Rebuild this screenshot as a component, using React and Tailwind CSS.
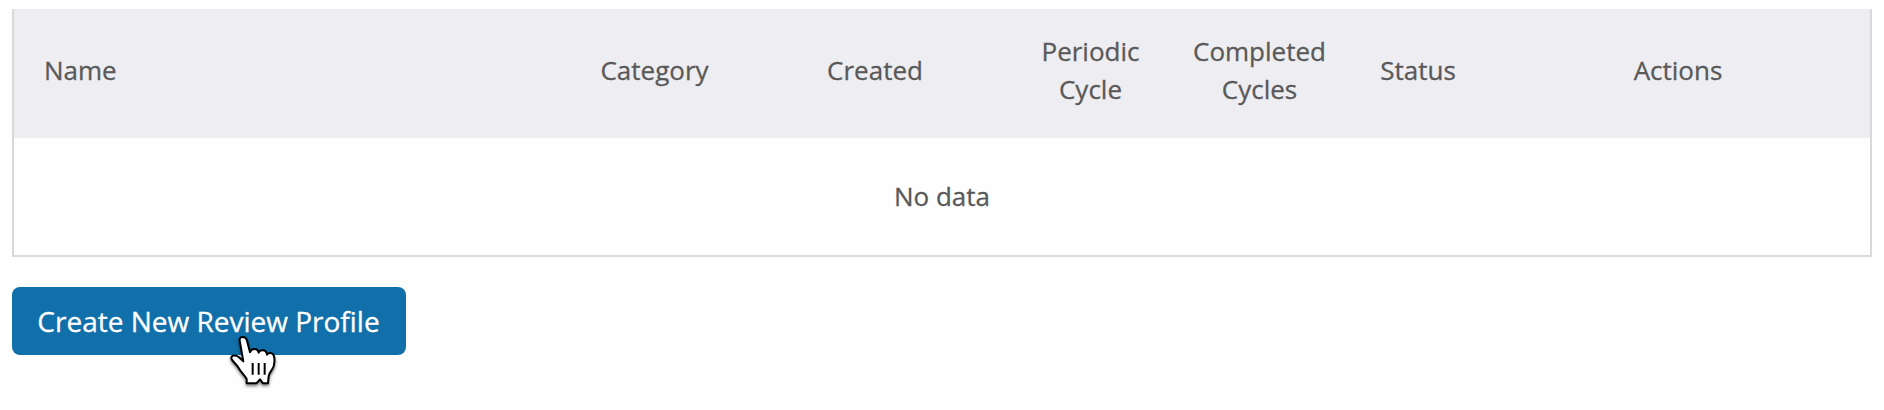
const columns = [
  { label: "Name", className: "w-[557px] pl-[30px] text-left" },
  { label: "Category", className: "w-[167px] text-center" },
  { label: "Created", className: "w-[274px] text-center" },
  { label: "Periodic Cycle", className: "w-[157px] px-6 text-center" },
  { label: "Completed Cycles", className: "w-[181px] px-6 text-center" },
  { label: "Status", className: "w-[136px] text-center" },
  { label: "Actions", className: "text-center" },
];

const HandCursor = () => (
  <svg
    viewBox="684 282 150 162"
    className="pointer-events-none absolute left-[216px] top-[47px] h-[54px] w-[50px] overflow-visible drop-shadow-[0_2px_1.5px_rgba(0,0,0,0.5)]"
    aria-hidden="true"
  >
    <path
      d="M719 301 C718 294 723 291 728 291 C735 291 739 295 741 302 L750 337 C752 329 759 326 766 327 C772 328 775 332 776 338 C780 330 790 329 796 333 C799 336 801 339 801 344 C807 336 818 338 821 346 C824 354 824 367 821 379 C818 389 808 397 806 408 L804 430 L789 430 L780 418 L769 430 L740 430 L740 417 C734 406 722 396 716 384 C710 372 697 365 694 356 C693 346 706 343 716 351 L730 364 Z"
      fill="white"
      stroke="black"
      strokeWidth="6"
      strokeLinejoin="round"
    />
    <path
      d="M758 369 V404 M776 369 V404 M794 369 V404"
      fill="none"
      stroke="black"
      strokeWidth="6"
    />
  </svg>
);

const App = () => {
  return (
    <div className="min-h-screen bg-[#fefefe] px-3 pt-[9px] font-['Open_Sans',sans-serif] [-webkit-text-stroke:0.3px]">
      {/* Review profiles */}
      <div className="border-2 border-t-0 border-[#d9d9d9]">
        <table className="w-full table-fixed text-[26px] leading-[38px] text-[#595959]">
          <thead>
            <tr className="h-[129px] bg-[#eeedf2]">
              {columns.map((column) => (
                <th
                  key={column.label}
                  className={`pb-[7px] font-normal ${column.className}`}
                >
                  {column.label}
                </th>
              ))}
            </tr>
          </thead>
          <tbody>
            <tr className="h-[117px]">
              <td colSpan={columns.length} className="pb-[2px] text-center">
                No data
              </td>
            </tr>
          </tbody>
        </table>
      </div>

      {/* Create button */}
      <div className="relative mt-[30px] w-[394px]">
        <button className="h-[68px] w-full rounded-lg bg-[#1170aa] pr-px text-[28px] text-white">
          Create New Review Profile
        </button>
        <HandCursor />
      </div>
    </div>
  );
};

export default App;
